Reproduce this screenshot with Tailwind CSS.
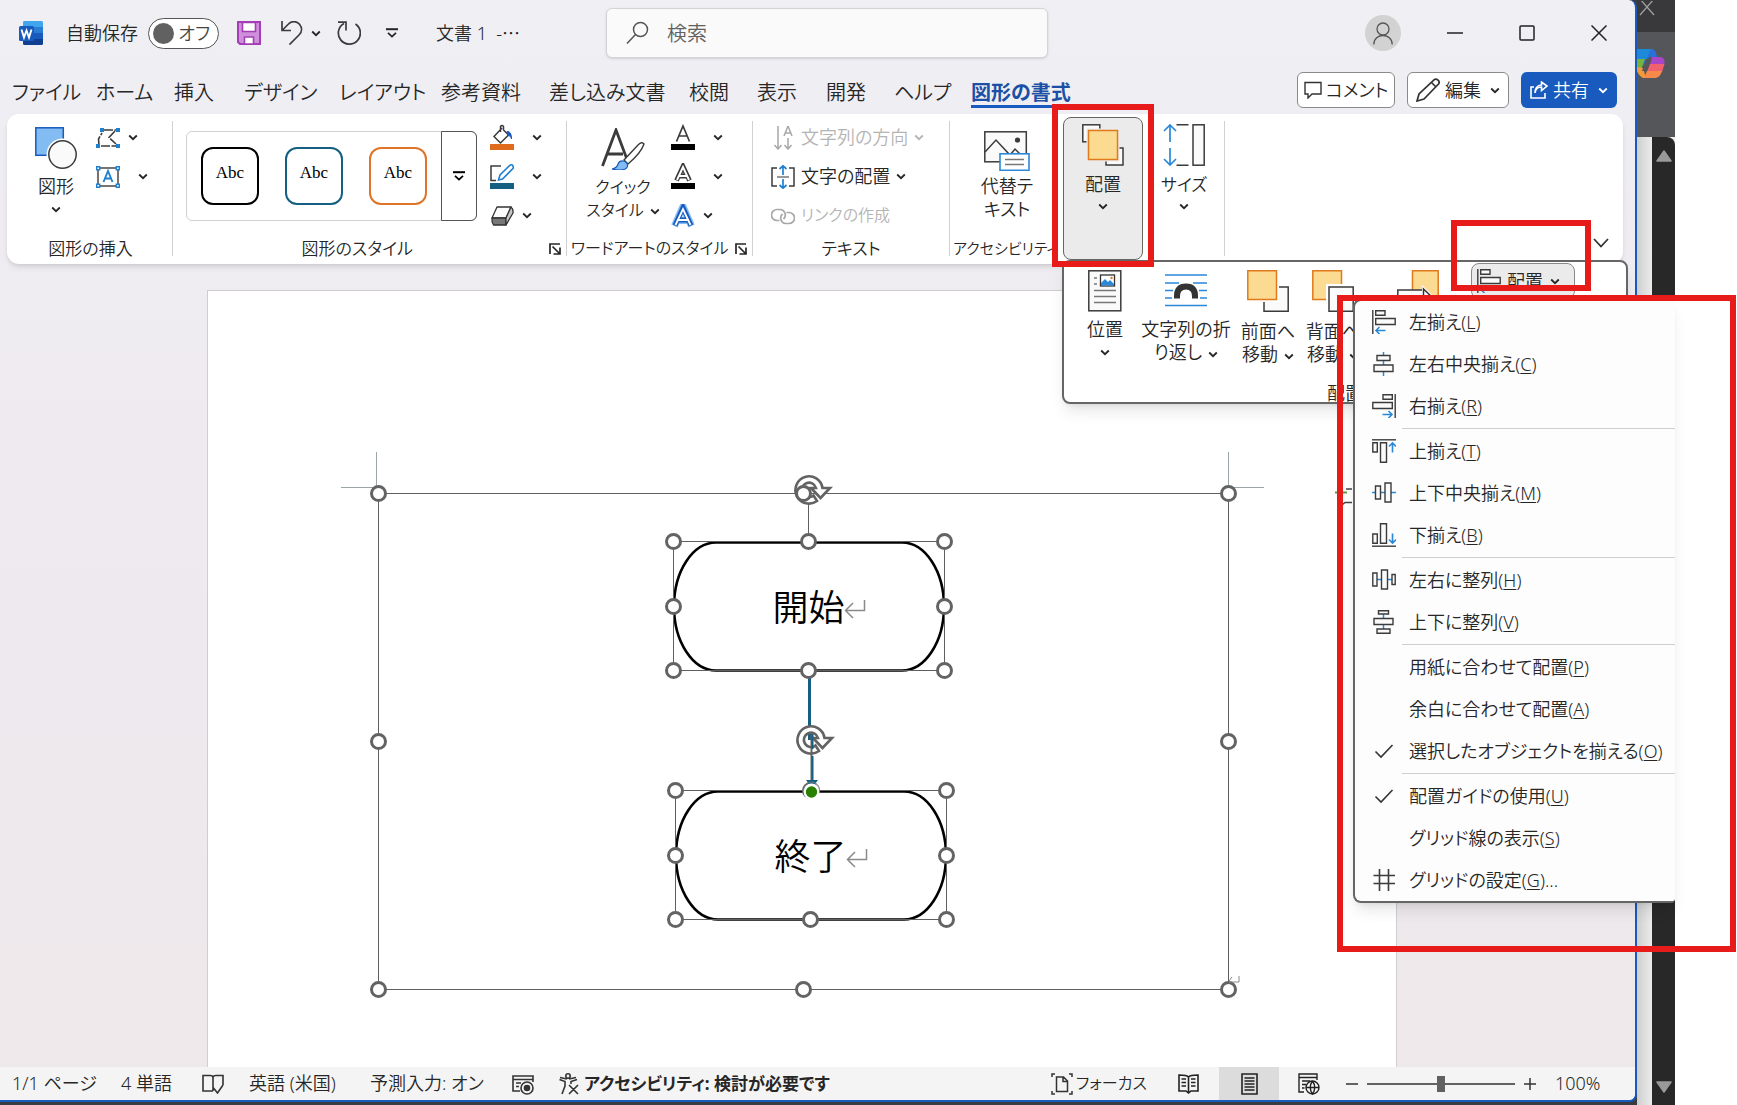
<!DOCTYPE html>
<html lang="ja">
<head>
<meta charset="utf-8">
<title>文書 1 - Word</title>
<script src="https://cdn.jsdelivr.net/npm/@tailwindcss/browser@4"></script>
</head>
<body class="bg-white text-[#262626] text-[18px] leading-[23px] font-[350] font-['Noto_Sans','Noto_Sans_CJK_JP',sans-serif] [font-feature-settings:'palt'] whitespace-nowrap">

<!-- shared symbols -->
<svg class="hidden">
  <symbol id="chev" viewBox="0 0 10 7"><path d="M1.2 1.5 5 5.2 8.8 1.5" fill="none" stroke="currentColor" stroke-width="1.8"/></symbol>
  <symbol id="more" viewBox="0 0 12 10"><path d="M0 1.2H12" stroke="currentColor" stroke-width="2"/><path d="M2 4.8 6 8.6 10 4.8" fill="none" stroke="currentColor" stroke-width="1.8"/></symbol>
  <symbol id="launch" viewBox="0 0 12 12"><path d="M1 11V1H11M3.500 3.500 10.500 10.500M11 4.500V11H4.500" fill="none" stroke="currentColor" stroke-width="1.700"/></symbol>
  <symbol id="rotate" viewBox="-16 -16 40 32" overflow="visible"><path d="M13.500-2A13.600 13.600 0 1 0 8 11L4.500 5.500A7.200 7.200 0 1 1 7-2H2L11.500 8 21-2Z" fill="#fff" stroke="#636363" stroke-width="2.600"/></symbol>
  <symbol id="alignleft" viewBox="0 0 24 24"><g fill="#fafafa" stroke="#3b3b3b" stroke-width="1.400"><path d="M.8 0V24"/><path d="M3.700 .8H13V5.300H3.700ZM3.700 8.500H23.200V14.500H3.700Z"/></g><path d="M13.500 20.500H4M7.500 17 4 20.500 7.500 24" fill="none" stroke="#2b88d8" stroke-width="1.600"/></symbol>
</svg>

<div class="relative flex min-h-screen overflow-hidden">
  <div class="flex min-w-0 flex-1 flex-col bg-[#3a3b40]">
    <div class="flex flex-1 flex-col overflow-hidden rounded-r-lg border-r-2 border-b-2 border-[#185abd] bg-linear-to-b from-[#efeff4] via-[#eeeaf0] via-40% to-[#eee8ea]">

      <!-- title bar -->
      <header class="flex h-[66px] shrink-0 items-center">
        <div class="flex w-[606px] shrink-0 items-center pl-[19px]">
          <svg class="size-6 shrink-0" viewBox="0 0 24 24"><path d="M5 0H22.500Q24 0 24 1.500V6H4V1.500Q4 0 5 0" fill="#41a5ee"/><path d="M4 6H24V12H4Z" fill="#2b7cd3"/><path d="M4 12H24V18H4Z" fill="#185abd"/><path d="M4 18H24V22.500Q24 24 22.500 24H5.500Q4 24 4 22.500Z" fill="#103f91"/><rect x="0" y="5" width="15" height="15" rx="1.500" fill="#185abd"/><path d="M2.500 8.500 5 16.500 7.500 9.500 10 16.500 12.500 8.500" fill="none" stroke="#fff" stroke-width="1.900"/></svg>
          <span class="ml-[23px] w-[82px]">自動保存</span>
          <button class="flex h-[31px] w-[71px] items-center justify-between rounded-full border border-[#555] bg-white pr-2 pl-1 text-[#444]"><span class="size-[21px] rounded-full bg-[#616161]"></span><span>オフ</span></button>
          <button class="ml-[18px]" aria-label="保存"><svg class="size-6" viewBox="0 0 24 24"><path d="M1 1H23V23H3L1 21Z" fill="#cf8fdb" stroke="#a33fb5" stroke-width="2"/><path d="M5.500 1.500H18.500V10.500H5.500ZM7.500 16H16.500V23H7.500Z" fill="#fff" stroke="#a33fb5" stroke-width="1.600"/></svg></button>
          <button class="ml-[19px]" aria-label="元に戻す"><svg class="size-6" viewBox="0 0 24 24" fill="none" stroke="#3b3b3b" stroke-width="1.700"><path d="M2 0V9.500H11M2 9.500 8.500 3C12 -.5 17 .2 19.500 3.200S22.500 10.500 19 14L9.500 23.500"/></svg></button>
          <button class="ml-[7px]" aria-label="元に戻す履歴"><svg class="h-[7px] w-[10px]"><use href="#chev"/></svg></button>
          <button class="ml-[16px]" aria-label="やり直し"><svg class="size-6" viewBox="0 0 24 24" fill="none" stroke="#3b3b3b" stroke-width="1.700"><path d="M1 1.200H9V9.500M18.500 3A11 11 0 1 1 7 2.500"/></svg></button>
          <button class="ml-[25px]" aria-label="クイックアクセスのカスタマイズ"><svg class="h-[10px] w-3"><use href="#more"/></svg></button>
          <span class="ml-[38px]">文書 1&nbsp; -⋯</span>
        </div>
        <label class="flex h-[50px] w-[442px] items-center rounded-md border border-[#d4d4d8] bg-[#fafafa] pl-[19px] shadow-sm">
          <svg class="size-6" viewBox="0 0 24 24" fill="none" stroke="#555" stroke-width="1.500"><circle cx="14.500" cy="8.500" r="7"/><path d="M9.500 13.500 1 22.500"/></svg>
          <input type="search" class="ml-[17px] w-[360px] bg-transparent text-[20px] placeholder:text-[#616161] outline-none" placeholder="検索">
        </label>
        <div class="ml-auto flex items-center pr-[28px]">
          <button aria-label="アカウント" class="mr-[46px] flex size-9 items-center justify-center rounded-full bg-[#d2d2d2]"><svg class="h-[23px] w-5" viewBox="0 0 20 23" fill="none" stroke="#555" stroke-width="1.300"><circle cx="10" cy="7" r="6"/><path d="M.8 22.500C.8 10.500 19.200 10.500 19.200 22.500"/></svg></button>
          <button aria-label="最小化" class="mr-14"><svg class="size-4" viewBox="0 0 16 16"><path d="M0 8H16" stroke="#222" stroke-width="1.500"/></svg></button>
          <button aria-label="最大化" class="mr-14"><svg class="size-4" viewBox="0 0 16 16"><rect x="1" y="1" width="14" height="14" rx="1" fill="none" stroke="#222" stroke-width="1.500"/></svg></button>
          <button aria-label="閉じる"><svg class="size-4" viewBox="0 0 16 16"><path d="M.5 .5 15.500 15.500M15.500 .5 .5 15.500" stroke="#222" stroke-width="1.500"/></svg></button>
        </div>
      </header>

      <!-- tabs -->
      <nav class="flex h-12 shrink-0 items-center text-[20px]">
        <div class="grid h-9 grid-cols-[84px_78px_70px_95px_102px_108px_140px_68px_69px_68px_77px_auto] pl-3 pt-2 leading-[25px]">
          <a href="#">ファイル</a><a href="#">ホーム</a><a href="#">挿入</a><a href="#">デザイン</a><a href="#">レイアウト</a><a href="#">参考資料</a><a href="#">差し込み文書</a><a href="#">校閲</a><a href="#">表示</a><a href="#">開発</a><a href="#">ヘルプ</a><a href="#" class="border-b-[3px] border-[#185abd] font-bold text-[#1b50a5]">図形の書式</a>
        </div>
        <div class="ml-auto flex gap-3 pr-[18px] text-[18px]">
          <button class="flex h-9 w-[98px] items-center justify-center gap-1 rounded-md border border-[#8a8a8a] bg-white"><svg class="size-[18px]" viewBox="0 0 18 18" fill="none" stroke="#333" stroke-width="1.400"><path d="M1 1.500H17V13H8L4 17V13H1Z"/></svg>コメント</button>
          <button class="flex h-9 w-[102px] items-center justify-center gap-[5px] rounded-md border border-[#8a8a8a] bg-white"><svg class="size-6" viewBox="0 0 24 24" fill="none" stroke="#333" stroke-width="1.700"><path d="M1 23 3 16 18 1.800Q20 .5 22 2.200T22.500 6L8 21ZM15.500 4.500 20 9"/></svg>編集<svg class="ml-1 h-[7px] w-[10px]"><use href="#chev"/></svg></button>
          <button class="flex h-9 w-[96px] items-center justify-center gap-[5px] rounded-md bg-[#185abd] text-white"><svg class="size-[18px]" viewBox="0 0 18 18" fill="none" stroke="#fff" stroke-width="1.600"><path d="M4 6H1V17H15V12M5 12C5.500 8 8 6 11.500 6V9.500L17 5 11.500 1V4C7 4 5 8 5 12Z"/></svg>共有<svg class="ml-1 h-[7px] w-[10px]"><use href="#chev"/></svg></button>
        </div>
      </nav>

      <!-- ribbon -->
      <section class="mr-3 ml-[7px] flex h-[150px] shrink-0 rounded-xl bg-white pt-1 shadow-md">
        <!-- insert shapes -->
        <div class="w-[165px]">
          <div class="flex h-[117px] pl-5">
            <button class="flex w-[58px] flex-col items-center pt-[9px]"><svg class="size-[42px] shrink-0" viewBox="0 0 42 42"><rect x=".8" y=".8" width="27.500" height="27.500" fill="#83bcf2" stroke="#185abd" stroke-width="1.500"/><circle cx="27.500" cy="27.500" r="16" fill="#fff"/><circle cx="27.500" cy="27.500" r="13.700" fill="#fafafa" stroke="#3b3b3b" stroke-width="1.500"/></svg><span class="mt-[6px]">図形</span><svg class="mt-2 h-[7px] w-[10px]"><use href="#chev"/></svg></button>
            <div class="ml-[11px]">
              <button class="flex h-[39px] items-center gap-2" aria-label="図形の編集"><svg class="size-6" viewBox="0 0 24 24"><path d="M8 4H20M19 5 13 11.500 20 18M3 19 2.500 13 6 7M5 20H20" fill="none" stroke="#3b3b3b" stroke-width="1.600" stroke-dasharray="9 1.500"/><path d="M4 2H8V6H4ZM20 2H24V6H20ZM0 18H4V22H0ZM20 18H24V22H20Z" fill="#2080d0"/></svg><svg class="h-[7px] w-[10px]"><use href="#chev"/></svg></button>
              <button class="flex h-[39px] items-center gap-[18px]" aria-label="テキストボックス"><svg class="size-6" viewBox="0 0 24 24"><rect x="2" y="3" width="20" height="18" fill="none" stroke="#3b3b3b" stroke-width="1.400"/><path d="M.7 1.700H3.700V4.700H.7ZM20.300 1.700H23.300V4.700H20.300ZM.7 19.300H3.700V22.300H.7ZM20.300 19.300H23.300V22.300H20.300Z" fill="#fff" stroke="#2080d0" stroke-width="1.400"/><path d="M7.500 17 12 6 16.500 17M9 13.500H15" fill="none" stroke="#2080d0" stroke-width="1.900"/></svg><svg class="h-[7px] w-[10px]"><use href="#chev"/></svg></button>
            </div>
          </div>
          <div class="pt-[2px] pl-[2px] text-center text-[17px]">図形の挿入</div>
        </div>
        <div class="my-[3px] mb-2 w-px bg-[#d0d0d0]"></div>
        <!-- shape styles -->
        <div class="w-[393px]">
          <div class="flex h-[117px] pl-[13px]">
            <div class="mt-[13px] flex h-[90px] w-[291px] items-center rounded-md border border-[#d0d0d0] pl-[14px] font-['Liberation_Serif',serif] text-[17px] font-normal text-black">
              <button class="h-[58px] w-[58px] rounded-xl border-2 border-black pb-2">Abc</button>
              <button class="ml-[26px] h-[58px] w-[58px] rounded-xl border-2 border-[#156082] pb-2">Abc</button>
              <button class="ml-[26px] h-[58px] w-[58px] rounded-xl border-2 border-[#e07428] pb-2">Abc</button>
              <button class="-my-px -mr-px ml-auto flex h-[90px] w-9 items-center justify-center rounded-r-md border border-[#555]" aria-label="その他のスタイル"><svg class="h-[10px] w-3"><use href="#more"/></svg></button>
            </div>
            <div class="ml-[13px]">
              <button class="flex h-[39px] items-center gap-[14px]" aria-label="塗りつぶし"><svg class="size-7" viewBox="0 0 28 28"><path d="M12 4 4 12.500 10.500 19 18.500 11 13.500 6V2.500Q12 .5 10.500 2.500V8" fill="none" stroke="#3b3b3b" stroke-width="1.500"/><path d="M17 7.500Q21.500 7 21.500 15 21.500 11.500 18 11.500Z" fill="#185abd" stroke="#185abd"/><rect x="0" y="20" width="24" height="6" fill="#e06b1c"/></svg><svg class="h-[7px] w-[10px]"><use href="#chev"/></svg></button>
              <button class="flex h-[39px] items-center gap-[14px]" aria-label="枠線"><svg class="size-7" viewBox="0 0 28 28"><path d="M11 3H1V17.500H6" fill="none" stroke="#3b3b3b" stroke-width="1.500"/><path d="M8.500 17 10 12 20 2.200Q22 1 23 3.200T22 6.500L12.500 16Z" fill="#fff" stroke="#2080d0" stroke-width="1.600"/><rect x="0" y="20" width="24" height="6" fill="#156082"/></svg><svg class="h-[7px] w-[10px]"><use href="#chev"/></svg></button>
              <button class="flex h-[39px] items-center gap-2" aria-label="効果"><svg class="size-6" viewBox="0 0 24 24" stroke="#333" stroke-width="1.300" stroke-linejoin="round"><path d="M7 3H21L16 14H2Z" fill="#fafafa"/><path d="M2 14H16V21H3.500Q1.500 18 2 14Z" fill="#777"/><path d="M21 3Q23.500 5 23 9L16 21V14Z" fill="#c8c8c8"/></svg><svg class="h-[7px] w-[10px]"><use href="#chev"/></svg></button>
            </div>
          </div>
          <div class="flex items-center justify-end pt-[2px] pr-[5px] text-[17px]"><span class="mr-[136px]">図形のスタイル</span><button aria-label="図形の書式設定"><svg class="size-3"><use href="#launch"/></svg></button></div>
        </div>
        <div class="my-[3px] mb-2 w-px bg-[#d0d0d0]"></div>
        <!-- wordart -->
        <div class="w-[185px]">
          <div class="flex h-[117px] pl-4">
            <button class="flex w-[80px] flex-col items-center pt-[10px]"><svg class="h-[42px] w-11 shrink-0" viewBox="0 0 44 42"><path d="M1.500 38 15 2 27 34M6 26H22" fill="none" stroke="#3b3b3b" stroke-width="2.800"/><path d="M43 16Q41 13 37 17L23 32 27 36Q40 25 43 16Z" fill="#fff" stroke="#3b3b3b" stroke-width="1.400"/><path d="M22 33Q27 34 26.500 38.500 24 44 11 41 16 40 17 36 18.500 32.500 22 33Z" fill="#83bcf2" stroke="#185abd" stroke-width="1.200"/></svg><span class="mt-[6px] text-[16px]">クイック<br>スタイル<svg class="ml-1.5 inline h-[7px] w-[10px]"><use href="#chev"/></svg></span></button>
            <div class="ml-2">
              <button class="flex h-[39px] items-center gap-[14px]" aria-label="文字の塗りつぶし"><svg class="size-7" viewBox="0 0 28 28"><path d="M5.500 17.500 12 2 18.500 17.500M7.500 12H16.500" fill="none" stroke="#3b3b3b" stroke-width="1.700"/><rect y="20" width="24" height="6"/></svg><svg class="h-[7px] w-[10px]"><use href="#chev"/></svg></button>
              <button class="flex h-[39px] items-center gap-[14px]" aria-label="文字の輪郭"><svg class="size-7" viewBox="0 0 28 28"><path d="M5.500 17.500 12 3.500 18.500 17.500M7.500 13H16.500" fill="none" stroke="#3b3b3b" stroke-width="4.800"/><path d="M6 17 12 4 18 17M7.500 13H16.500" fill="none" stroke="#fff" stroke-width="1.900"/><rect y="20" width="24" height="6"/></svg><svg class="h-[7px] w-[10px]"><use href="#chev"/></svg></button>
              <button class="flex h-[39px] items-center gap-2" aria-label="文字の効果"><svg class="size-6" viewBox="0 0 24 24" fill="none"><path d="M3.500 22 12 2.500 20.500 22M6 16.500H18" stroke="#83bcf2" stroke-width="7"/><path d="M4 21.500 12 3.500 20 21.500M6 16H18" stroke="#185abd" stroke-width="4.800"/><path d="M4.500 21 12 5 19.500 21M6 16H18" stroke="#fff" stroke-width="1.800"/></svg><svg class="h-[7px] w-[10px]"><use href="#chev"/></svg></button>
            </div>
          </div>
          <div class="flex items-center justify-between pt-[2px] pr-[5px] pl-1 text-[16px]">ワードアートのスタイル<button aria-label="文字の書式設定"><svg class="size-3"><use href="#launch"/></svg></button></div>
        </div>
        <div class="my-[3px] mb-2 w-px bg-[#d0d0d0]"></div>
        <!-- text -->
        <div class="w-[196px]">
          <div class="flex h-[117px] flex-col items-start pl-[18px]">
            <button disabled class="flex h-[39px] items-center gap-[6px] text-[#b4b4b4]"><svg class="size-6" viewBox="0 0 24 24" fill="none" stroke="#a8a8a8" stroke-width="1.500"><path d="M7 0V23M3.500 19 7 23 10.500 19M17 12V23M13.500 19 17 23 20.500 19M13 10 17 0 21 10M14.500 7H19.500"/></svg>文字列の方向<svg class="h-[7px] w-[10px]"><use href="#chev"/></svg></button>
            <button class="flex h-[39px] items-center gap-[6px]"><svg class="size-6" viewBox="0 0 24 24" fill="none"><path d="M6 3H1V21H6M18 3H23V21H18" stroke="#3b3b3b" stroke-width="1.500"/><path d="M6 12H18" stroke="#777" stroke-width="1.500"/><path d="M12 10V1M8.500 4 12 .8 15.500 4M12 14V23M8.500 20 12 23.200 15.500 20" stroke="#2080d0" stroke-width="1.700"/></svg>文字の配置<svg class="h-[7px] w-[10px]"><use href="#chev"/></svg></button>
            <button disabled class="flex h-[39px] items-center gap-[6px] text-[#b4b4b4]"><svg class="size-6" viewBox="0 0 24 24" fill="none" stroke="#a8a8a8" stroke-width="1.700"><path d="M8.500 16.500H6A5.500 5.500 0 0 1 6 5.500H9.500A5.500 5.500 0 0 1 12.500 15M15.500 8.500H18A5.500 5.500 0 0 1 18 19.500H14.500A5.500 5.500 0 0 1 11.500 10"/></svg><span class="text-[16px]">リンクの作成</span></button>
          </div>
          <div class="pt-[2px] text-center text-[17px]">テキスト</div>
        </div>
        <div class="my-[3px] mb-2 w-px bg-[#d0d0d0]"></div>
        <!-- accessibility -->
        <div class="w-[106px]">
          <div class="flex h-[117px] justify-center pl-2">
            <button class="flex flex-col items-center pt-[13px]"><svg class="h-10 w-[46px] shrink-0" viewBox="0 0 46 40"><rect x=".8" y=".8" width="41.500" height="30" fill="#fafafa" stroke="#3b3b3b" stroke-width="1.500"/><path d="M1 21 12 9 26 24 31 18 36 23" fill="none" stroke="#3b3b3b" stroke-width="1.500"/><circle cx="33.500" cy="9" r="2.600" fill="#3b3b3b"/><rect x="16" y="22.800" width="29" height="16.500" fill="#fff" stroke="#2b88d8" stroke-width="1.600"/><path d="M21 28.500H40M21 33.500H40" stroke="#777" stroke-width="1.400"/></svg><span class="mt-[4px]">代替テ<br>キスト</span></button>
          </div>
          <div class="pt-[2px] pl-[3px] text-[15px]">アクセシビリティ</div>
        </div>
        <button class="-mt-px ml-[7px] flex h-[143px] w-[80px] flex-col items-center rounded-lg border border-[#666] bg-[#ebebeb] pt-[6px]"><svg class="size-[42px] shrink-0" viewBox="0 0 42 42"><rect x=".8" y=".8" width="17" height="17" fill="#fafafa" stroke="#3b3b3b" stroke-width="1.500"/><rect x="24" y="24" width="17" height="17" fill="#fafafa" stroke="#3b3b3b" stroke-width="1.500"/><rect x="4.500" y="4.500" width="33" height="33" fill="#ebebeb"/><rect x="6.500" y="6.500" width="29" height="29" fill="#fadb91" stroke="#e07a1c" stroke-width="1.500"/></svg><span class="mt-[7px]">配置</span><svg class="mt-[7px] h-[7px] w-[10px]"><use href="#chev"/></svg></button>
        <button class="-mt-px ml-[11px] flex w-[60px] flex-col items-center pt-[7px]"><svg class="size-[42px] shrink-0" viewBox="0 0 42 42" fill="none"><path d="M7 18V1M1 7 7 1 13 7M7 24V41M1 35 7 41 13 35" stroke="#2b88d8" stroke-width="1.700"/><path d="M13.500 .8H25.500M13.500 41.200H25.500" stroke="#3b3b3b" stroke-width="1.500"/><rect x="30" y=".8" width="11.200" height="40.400" fill="#fafafa" stroke="#3b3b3b" stroke-width="1.500"/></svg><span class="mt-[7px] text-[17px]">サイズ</span><svg class="mt-[7px] h-[7px] w-[10px]"><use href="#chev"/></svg></button>
        <div class="my-[3px] mb-2 ml-[10px] w-px bg-[#d0d0d0]"></div>
        <button aria-label="リボンを折りたたむ" class="mr-[14px] mb-4 ml-auto self-end"><svg class="h-[10px] w-4" viewBox="0 0 16 10"><path d="M1 1 8 8.500 15 1" fill="none" stroke="#333" stroke-width="1.800"/></svg></button>
      </section>

      <!-- document -->
      <main class="flex flex-1 pt-[26px]">
        <div class="relative mr-[238px] ml-[207px] min-h-[777px] flex-1 border-x border-t border-[#d0cdd0] bg-white">
          <svg class="absolute top-0 left-0 h-[776px] w-[1187px]" viewBox="208 291 1187 776" fill="none">
            <path d="M376.500 452V487.500H341M1228.500 452V487.500H1264" stroke="#9aa5a8"/>
            <rect x="378.500" y="493.500" width="850" height="496" stroke="#5f5f5f"/>
            <path d="M1335 492.500H1347" stroke="#5b9a44" stroke-width="2"/><path d="M1352 489H1346M1352 502.500H1345L1342 505" stroke="#444" stroke-width="1.500"/>
            <path d="M809.500 670V740" stroke="#156082" stroke-width="3"/>
            <path d="M808.500 490V541" stroke="#5f5f5f"/>
            <g id="terminal">
              <path d="M716 542.500H902A42 64 0 0 1 902 670.500H716A42 64 0 0 1 716 542.500Z" stroke="#000" stroke-width="2.600"/>
              <rect x="673.500" y="541.500" width="271" height="129" stroke="#5f5f5f"/>
              <g fill="#fff" stroke="#636363" stroke-width="3"><circle cx="673.500" cy="541.500" r="7"/><circle cx="944.500" cy="541.500" r="7"/><circle cx="673.500" cy="606.500" r="7"/><circle cx="944.500" cy="606.500" r="7"/><circle cx="673.500" cy="670.500" r="7"/><circle cx="944.500" cy="670.500" r="7"/><circle cx="808.500" cy="541.500" r="7"/><circle cx="808.500" cy="670.500" r="7"/></g>
              <path d="M864.500 600V610.500H846M853 603 845.500 610.500 853 618" stroke="#8a8a8a" stroke-width="1.500"/>
            </g>
            <use href="#terminal" x="2" y="249"/>
            <use href="#rotate" x="793" y="474" width="40" height="32"/>
            <use href="#rotate" x="795" y="724" width="40" height="32"/>
            <path d="M811.500 732V782" stroke="#636363" stroke-width="2"/><path d="M812.500 734V749M812.500 756V781" stroke="#156082" stroke-width="2"/>
            <path d="M806 780H818L812 788Z" fill="#156082"/>
            <circle cx="811.500" cy="791.500" r="8" fill="#fff"/><path d="M803.500 790A8 8 0 0 1 819.500 790" stroke="#777"/><circle cx="811.500" cy="792" r="5.700" fill="#2a8000"/>
            <g fill="#fff" stroke="#636363" stroke-width="3"><circle cx="378.500" cy="493.500" r="7"/><circle cx="803.500" cy="493.500" r="7"/><circle cx="1228.500" cy="493.500" r="7"/><circle cx="378.500" cy="741.500" r="7"/><circle cx="1228.500" cy="741.500" r="7"/><circle cx="378.500" cy="989.500" r="7"/><circle cx="803.500" cy="989.500" r="7"/><circle cx="1228.500" cy="989.500" r="7"/></g>
            <path d="M1239 976V982H1229M1232 977 1229 981" stroke="#8a8a8a"/>
          </svg>
          <div class="absolute top-[252px] left-[465px] flex h-[129px] w-[271px] items-center justify-center text-[36px] leading-[40px] text-black">開始</div>
          <div class="absolute top-[501px] left-[467px] flex h-[129px] w-[271px] items-center justify-center text-[36px] leading-[40px] text-black">終了</div>
        </div>
      </main>

      <!-- status bar -->
      <footer class="flex h-[33px] shrink-0 items-center bg-[#f4f4f4] pl-3 text-[18px]">
        <span class="w-[109px]">1/1 ページ</span><span class="w-[81px]">4 単語</span>
        <svg class="h-5 w-[22px]" viewBox="0 0 22 20" fill="none" stroke="#333" stroke-width="1.600"><path d="M11 2.500V17M11 17H1V1.500H8Q11 1.500 11 3.500 11 1.500 14 1.500H21V11M11.500 14 15.500 19 21 11"/></svg>
        <span class="ml-[25px] w-[121px]">英語 (米国)</span><span class="w-[142px]">予測入力: オン</span>
        <svg class="size-[22px]" viewBox="0 0 22 22" fill="none" stroke="#333" stroke-width="1.600"><path d="M8 18H1V3H21V9M1 6.500H21M4 10H9M4 13.500H7"/><circle cx="15" cy="15" r="6"/><circle cx="15" cy="15" r="2.500" fill="#333"/></svg>
        <svg class="ml-[24px] size-[22px]" viewBox="0 0 22 22" fill="none" stroke="#333" stroke-width="1.600"><circle cx="10" cy="3" r="2.200"/><path d="M9 6 2 4.500M1.500 6.500 7 8.500V13L4 21M11 6 18 4.500M19 6.500 13 8.500V11M11 12 20 21M20 12 11 21"/></svg>
        <span class="ml-1 text-[17px] font-bold">アクセシビリティ: 検討が必要です</span>
        <div class="ml-auto flex h-full items-center pr-[30px]">
          <svg class="size-[22px]" viewBox="0 0 22 22" fill="none" stroke="#333" stroke-width="1.500"><path d="M4 1H1V4M18 1H21V4M1 18V21H4M21 18V21H18M5.500 4H12.500L16.500 8V18.500H5.500ZM12 4V8.500H16.500"/></svg>
          <span class="w-[105px] pl-[3px] text-[16px]">フォーカス</span>
          <button aria-label="閲覧モード"><svg class="h-5 w-[21px]" viewBox="0 0 21 20" fill="none" stroke="#222" stroke-width="1.600"><path d="M10.500 3V19M10.500 3Q9 1 1 1V17H8L10.500 19 13 17H20V1Q12 1 10.500 3ZM3.500 5H8M3.500 8.500H8M3.500 12H8M13 5H17.500M13 8.500H17.500M13 12H17.500"/></svg></button>
          <button aria-label="印刷レイアウト" class="ml-5 flex h-full w-[60px] items-center justify-center bg-[#dcdcdc]"><svg class="h-[22px] w-[17px]" viewBox="0 0 17 22" fill="none" stroke="#222" stroke-width="1.600"><path d="M1 1H16V21H1ZM3.500 5H13.500M3.500 8H13.500M3.500 11H13.500M3.500 14H13.500M3.500 17H13.500"/></svg></button>
          <button aria-label="Webレイアウト" class="ml-[19px]"><svg class="size-[22px]" viewBox="0 0 22 22" fill="none" stroke="#222" stroke-width="1.400"><path d="M6 19H1V1H19V7M1 4.500H19M4 8H12M4 11.500H8M4 15H6.500"/><circle cx="14.500" cy="14.500" r="6.500"/><path d="M8 14.500H21M14.500 8Q10 14.500 14.500 21 19 14.500 14.500 8"/></svg></button>
          <button aria-label="縮小" class="ml-[26px]"><svg class="size-3" viewBox="0 0 12 12"><path d="M0 6H12" stroke="#333" stroke-width="1.500"/></svg></button>
          <input type="range" min="0" max="200" value="100" aria-label="ズーム" class="mx-[9px] h-4 w-[148px] appearance-none bg-[linear-gradient(#616161,#616161)] bg-[length:100%_2px] bg-center bg-no-repeat [&::-webkit-slider-thumb]:h-4 [&::-webkit-slider-thumb]:w-2 [&::-webkit-slider-thumb]:appearance-none [&::-webkit-slider-thumb]:bg-[#616161]">
          <button aria-label="拡大"><svg class="size-3" viewBox="0 0 12 12"><path d="M0 6H12M6 0V12" stroke="#333" stroke-width="1.500"/></svg></button>
          <span class="ml-[19px] w-[50px]">100%</span>
        </div>
      </footer>
    </div>
    <div class="h-[3px]"></div>
  </div>

  <!-- window behind -->
  <aside class="flex w-[38px] shrink-0 flex-col bg-[#55565a]">
    <div class="h-8 bg-[#39393c] pt-px pl-[2px]"><svg class="size-4" viewBox="0 0 16 16"><path d="M1-2 15 14M15-2 1 14" stroke="#a0a0a0" stroke-width="1.300"/></svg></div>
    <div class="h-[105px] pt-4"><svg class="h-[31px] w-7" viewBox="0 0 28 31"><path d="M0 1H14Q18 1 19 5L20 9H12L7 20Z" fill="#2b6fd8"/><path d="M0 1V12H9L12 5Q13 1 16 1Z" fill="#1c8ad8"/><path d="M0 11H8L4 22 0 20Z" fill="#74b33c"/><path d="M0 19 6 20 9 30H6Q2 28 0 23Z" fill="#f29a3a"/><path d="M15 9H24Q29 11 27 17H13Z" fill="#a946c8"/><path d="M13 16H27.500L25 24H10Z" fill="#f0616d"/><path d="M10 23H25Q23 30 18 30H7Z" fill="#f58a4a"/><path d="M9 11H14L9 23H5Z" fill="#55565a"/></svg></div>
    <div class="flex flex-1 bg-linear-to-r from-[#cfcfcf] to-[#ececec] to-40%">
      <div class="w-[15px]"></div>
      <div class="flex flex-1 flex-col items-center justify-between rounded-tr-lg bg-[#282828] pt-[13px] pb-3">
        <svg class="h-3 w-4" viewBox="0 0 16 12"><path d="M8 1 15 11H1Z" fill="#9a9a9a" stroke="#9a9a9a" stroke-width="1.500" stroke-linejoin="round"/></svg>
        <svg class="h-3 w-4" viewBox="0 0 16 12"><path d="M8 11 15 1H1Z" fill="#9a9a9a" stroke="#9a9a9a" stroke-width="1.500" stroke-linejoin="round"/></svg>
      </div>
    </div>
  </aside>
  <div class="w-[62px] shrink-0"></div>

  <!-- arrange flyout -->
  <div class="absolute top-[260px] left-[1062px] flex h-[144px] w-[566px] flex-col rounded-lg border-2 border-[#666] bg-white px-3 shadow-lg">
    <div class="flex gap-[3px]">
      <button class="flex w-[58px] flex-col items-center pt-2"><svg class="h-[42px] w-[34px]" viewBox="0 0 34 42"><rect x=".8" y=".8" width="32" height="40" fill="#fafafa" stroke="#3b3b3b" stroke-width="1.500"/><path d="M6 8H9M6 14H9M6 20.500H28M6 26.500H28M6 32.500H28" stroke="#777" stroke-width="1.500"/><rect x="12.500" y="5" width="14" height="11" fill="#fff" stroke="#333" stroke-width="1.300"/><path d="M13 13 17 9 20 12 22 10 26 14V15.500H13Z" fill="#2b88d8"/><circle cx="23.500" cy="8" r="1.200" fill="#e07a1c"/></svg><span class="mt-[6px]">位置</span><svg class="mt-2 h-[7px] w-[10px]"><use href="#chev"/></svg></button>
      <button class="flex w-[98px] flex-col items-center pt-2"><svg class="h-[42px] w-[42px]" viewBox="0 0 42 42" fill="none"><path d="M0 5H42M0 13H14M28 13H42M0 20.500H8M34 20.500H42M0 28H7M35 28H42M0 35.500H42" stroke="#2b88d8" stroke-width="1.700"/><path d="M12 28.500V26Q12 16.500 21 16.500T30 26V28.500" stroke="#333" stroke-width="6"/></svg><span class="mt-[6px]">文字列の折<br>り返し<svg class="ml-1.5 inline h-[7px] w-[10px]"><use href="#chev"/></svg></span></button>
      <button class="flex w-[60px] flex-col items-center pt-2"><svg class="size-[42px]" viewBox="0 0 42 42"><path d="M17 17H41.200V41.200H17Z" fill="#fafafa" stroke="#3b3b3b" stroke-width="1.500"/><path d="M0 0H32V32H0Z" fill="#fff"/><path d="M.8 .8H29.500V29.500H.8Z" fill="#fadb91" stroke="#e07a1c" stroke-width="1.500"/></svg><span class="mt-2">前面へ<br>移動<svg class="ml-1.5 inline h-[7px] w-[10px]"><use href="#chev"/></svg></span></button>
      <button class="ml-px flex w-[62px] flex-col items-center pt-2"><svg class="size-[42px]" viewBox="0 0 42 42"><path d="M.8 .8H29.500V29.500H.8Z" fill="#fadb91" stroke="#e07a1c" stroke-width="1.500"/><path d="M14 14H42V42H14Z" fill="#fff"/><path d="M17 17H41.200V41.200H17Z" fill="#fafafa" stroke="#3b3b3b" stroke-width="1.500"/></svg><span class="mt-2">背面へ<br>移動<svg class="ml-1.5 inline h-[7px] w-[10px]"><use href="#chev"/></svg></span></button>
      <button class="ml-px flex w-[100px] flex-col items-center pt-2" aria-label="オブジェクトの選択と表示"><svg class="size-[42px]" viewBox="0 0 42 42"><path d="M15.500 .8H41.200V27H15.500Z" fill="#fadb91" stroke="#e07a1c" stroke-width="1.500"/><path d="M.8 20H26V42H.8Z" fill="#fafafa" stroke="#3b3b3b" stroke-width="1.500"/><path d="M25 15V40L42 32Z" fill="#fff"/><path d="M26.500 19V36L39 31Z" fill="#fff" stroke="#333" stroke-width="1.500"/></svg></button>
      <button class="mt-px flex h-9 w-[104px] shrink-0 items-center gap-[6px] self-start rounded-lg border border-[#8a8a8a] bg-[#ebebeb] pl-[5px]"><svg class="size-6"><use href="#alignleft"/></svg>配置<svg class="ml-px h-[7px] w-[10px]"><use href="#chev"/></svg></button>
    </div>
    <div class="mt-auto self-center leading-[18px]">配置</div>
  </div>

  <!-- align menu -->
  <div role="menu" class="absolute top-[299px] left-[1353px] flex w-[322px] flex-col rounded-l-lg rounded-br-sm border-2 border-r-0 border-[#666] bg-[#fdfdfd] text-[18px] shadow-lg [&_button]:flex [&_button]:h-[42px] [&_button]:items-center [&_button]:gap-[13px] [&_button]:pl-[17px] [&_hr]:my-px [&_hr]:ml-[47px] [&_hr]:border-[#cfcfcf] [&_u]:underline-offset-2 [&_svg]:size-6 [&_svg]:shrink-0">
    <button role="menuitem"><svg><use href="#alignleft"/></svg><span>左揃え(<u>L</u>)</span></button>
    <button role="menuitem"><svg viewBox="0 0 24 24"><path d="M11.500 0V24" stroke="#2b88d8" stroke-width="1.500"/><path d="M5 3.500H18V8.500H5ZM2 13H21V19.500H2Z" fill="#fafafa" stroke="#3b3b3b" stroke-width="1.400"/></svg><span>左右中央揃え(<u>C</u>)</span></button>
    <button role="menuitem"><svg viewBox="0 0 24 24" stroke="#3b3b3b" stroke-width="1.400"><path d="M23.200 0V24"/><path d="M11 .8H20.300V5.300H11ZM.8 8.500H20.300V14.500H.8Z" fill="#fafafa"/><path d="M10.500 20.500H20M16.500 17 20 20.500 16.500 24" fill="none" stroke="#2b88d8" stroke-width="1.600"/></svg><span>右揃え(<u>R</u>)</span></button>
    <hr>
    <button role="menuitem"><svg viewBox="0 0 24 24" stroke="#3b3b3b" stroke-width="1.400"><path d="M0 .8H24"/><path d="M.8 3.700H5.300V13H.8ZM8.500 3.700H14.500V23.200H8.500Z" fill="#fafafa"/><path d="M20.500 13.500V4M17 7.500 20.500 4 24 7.500" fill="none" stroke="#2b88d8" stroke-width="1.600"/></svg><span>上揃え(<u>T</u>)</span></button>
    <button role="menuitem"><svg viewBox="0 0 24 24"><path d="M0 11.500H24" stroke="#2b88d8" stroke-width="1.500"/><path d="M3.500 5H8.500V18H3.500ZM13 2H19V21H13Z" fill="#fafafa" stroke="#3b3b3b" stroke-width="1.400"/></svg><span>上下中央揃え(<u>M</u>)</span></button>
    <button role="menuitem"><svg viewBox="0 0 24 24" stroke="#3b3b3b" stroke-width="1.400"><path d="M0 23.200H24"/><path d="M.8 11H5.300V20.300H.8ZM8.500 .8H14.500V20.300H8.500Z" fill="#fafafa"/><path d="M20.500 10.500V20M17 16.500 20.500 20 24 16.500" fill="none" stroke="#2b88d8" stroke-width="1.600"/></svg><span>下揃え(<u>B</u>)</span></button>
    <hr>
    <button role="menuitem"><svg viewBox="0 0 24 24"><path d="M5 11.500H20" stroke="#2b88d8" stroke-width="1.500"/><path d="M.8 5H5V18H.8ZM9.500 2H15.500V21H9.500ZM20 6.500H23.200V16.500H20Z" fill="#fafafa" stroke="#3b3b3b" stroke-width="1.400"/></svg><span>左右に整列(<u>H</u>)</span></button>
    <button role="menuitem"><svg viewBox="0 0 24 24"><path d="M11.500 4V20" stroke="#2b88d8" stroke-width="1.500"/><path d="M6.500 .8H16.500V4H6.500ZM2 8.500H21V14.500H2ZM5 19H18V23.200H5Z" fill="#fafafa" stroke="#3b3b3b" stroke-width="1.400"/></svg><span>上下に整列(<u>V</u>)</span></button>
    <hr>
    <button role="menuitem"><span class="pl-[37px]">用紙に合わせて配置(<u>P</u>)</span></button>
    <button role="menuitem"><span class="pl-[37px]">余白に合わせて配置(<u>A</u>)</span></button>
    <button role="menuitem"><svg viewBox="0 0 24 24"><path d="M3.500 12.500 9 18 20.500 6" fill="none" stroke="#333" stroke-width="1.600"/></svg><span>選択したオブジェクトを揃える(<u>O</u>)</span></button>
    <hr>
    <button role="menuitem"><svg viewBox="0 0 24 24"><path d="M3.500 12.500 9 18 20.500 6" fill="none" stroke="#333" stroke-width="1.600"/></svg><span>配置ガイドの使用(<u>U</u>)</span></button>
    <button role="menuitem"><span class="pl-[37px]">グリッド線の表示(<u>S</u>)</span></button>
    <button role="menuitem"><svg viewBox="0 0 24 24"><path d="M7.500 1V23M16.500 1V23M1.500 7.500H23M1.500 15.500H23" fill="none" stroke="#3b3b3b" stroke-width="1.600"/></svg><span>グリッドの設定(<u>G</u>)...</span></button>
  </div>

  <!-- highlight frames -->
  <div class="pointer-events-none absolute top-[104px] left-[1052px] h-[163px] w-[102px] border-[6px] border-[#e81b1b]"></div>
  <div class="pointer-events-none absolute top-[220px] left-[1451px] h-[71px] w-[140px] border-[6px] border-[#e81b1b]"></div>
  <div class="pointer-events-none absolute top-[295px] left-[1337px] h-[657px] w-[399px] border-[6px] border-[#e81b1b]"></div>
</div>
</body>
</html>
